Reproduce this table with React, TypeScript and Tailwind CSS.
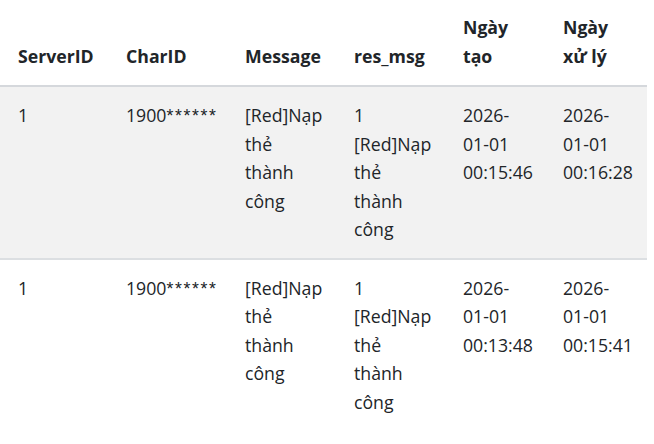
const headers = [
  ["ServerID"],
  ["CharID"],
  ["Message"],
  ["res_msg"],
  ["Ngày", "tạo"],
  ["Ngày", "xử lý"],
];

const colWidths = ["w-[108px]", "w-[119px]", "w-[109px]", "w-[109px]", "w-[100px]", "w-[102px]"];

const rows = [
  {
    cells: [
      ["1"],
      ["1900******"],
      ["[Red]Nạp", "thẻ", "thành", "công"],
      ["1", "[Red]Nạp", "thẻ", "thành", "công"],
      ["2026-", "01-01", "00:15:46"],
      ["2026-", "01-01", "00:16:28"],
    ],
    striped: true,
  },
  {
    cells: [
      ["1"],
      ["1900******"],
      ["[Red]Nạp", "thẻ", "thành", "công"],
      ["1", "[Red]Nạp", "thẻ", "thành", "công"],
      ["2026-", "01-01", "00:13:48"],
      ["2026-", "01-01", "00:15:41"],
    ],
    striped: false,
  },
];

// masked ids: the stars are small and raised in the original font
function Masked({ text }: { text: string }) {
  const idx = text.indexOf("*");
  if (idx < 0) return <>{text}</>;
  return (
    <>
      {text.slice(0, idx)}
      <span className="font-['Liberation_Sans',sans-serif] tracking-[1.6px]">
        {text.slice(idx)}
      </span>
    </>
  );
}

function Lines({ lines }: { lines: string[] }) {
  return (
    <>
      {lines.map((line, i) => (
        <span className="block" key={i}>
          <Masked text={line} />
        </span>
      ))}
    </>
  );
}

export default function App() {
  return (
    <div className="min-h-screen bg-white font-['Open_Sans',sans-serif] text-[17.7px] leading-[28.5px] text-[#212529]">
      <table className="w-[647px] table-fixed border-collapse">
        <colgroup>
          {colWidths.map((w) => (
            <col className={w} key={w} />
          ))}
        </colgroup>
        <thead>
          <tr className="border-b-2 border-[#d5d8dc]">
            {headers.map((h) => (
              <th
                className="px-[18px] pt-[13px] pb-[15px] text-left align-bottom font-bold"
                key={h.join(" ")}
              >
                <Lines lines={h} />
              </th>
            ))}
          </tr>
        </thead>
        <tbody>
          {rows.map((row, r) => (
            <tr
              className={
                row.striped
                  ? "border-b-2 border-[#dcdfe2] bg-[#f2f2f2]"
                  : "bg-white"
              }
              key={r}
            >
              {row.cells.map((c, i) => (
                <td className="px-[18px] py-[14px] align-top" key={i}>
                  <Lines lines={c} />
                </td>
              ))}
            </tr>
          ))}
        </tbody>
      </table>
    </div>
  );
}
